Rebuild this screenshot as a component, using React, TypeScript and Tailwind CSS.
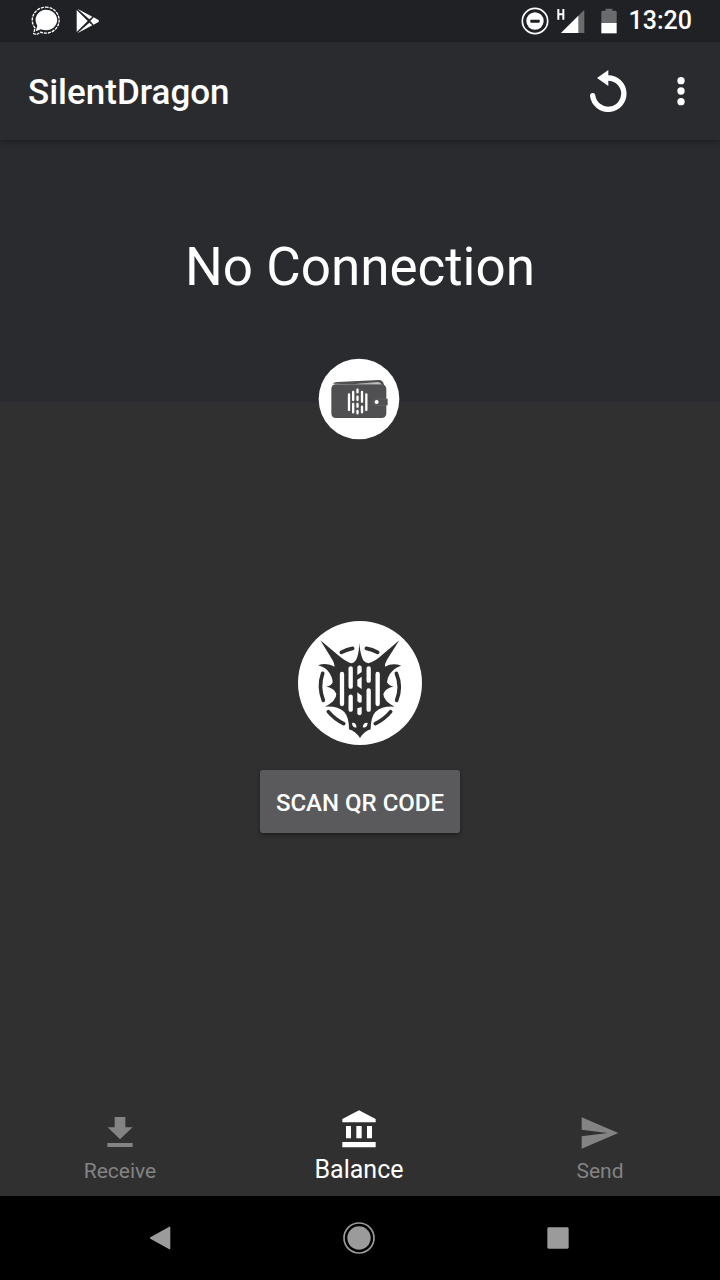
import React from "react";

function ChatIcon() {
  return (
    <svg className="h-[30px] w-[30px]" viewBox="0 0 90 90" fill="none" aria-hidden="true">
      <path
        d="M46 11a34 31 0 1 1-13 59L17 76l5-17A32 31 0 0 1 46 11Z"
        fill="#fff"
      />
      <path
        d="M47 3.500a40 39 0 1 1-15 75L19 86l-8-3 4-17A41 39 0 0 1 47 3.500Z"
        stroke="#fff"
        strokeWidth="4"
        strokeDasharray="9 3"
      />
    </svg>
  );
}

function PlayStoreIcon() {
  return (
    <svg className="h-[26px] w-6" viewBox="0 0 72 78" fill="#fff" aria-hidden="true">
      <path d="M2 6v66l33-33Z" />
      <path d="M4 2l36 32 9-8Z" />
      <path d="M4 76l36-32 9 8Z" />
      <path d="M43 39l10-11 13 7q6 4 0 8l-13 7Z" />
    </svg>
  );
}

function DoNotDisturbIcon() {
  return (
    <svg className="h-[28px] w-[28px]" viewBox="0 0 84 84" fill="none" aria-hidden="true">
      <circle cx="42" cy="42" r="38" stroke="#fff" strokeWidth="5" />
      <circle cx="42" cy="42" r="26" fill="#fff" />
      <rect x="28" y="38" width="28" height="9" rx="2" fill="#202124" />
    </svg>
  );
}

function SignalIcon() {
  return (
    <svg className="h-[28px] w-[28px]" viewBox="0 0 84 84" aria-hidden="true">
      <path d="M82 8v70H12Z" fill="#6a6b6d" />
      <path d="M64 26v52H12Z" fill="#fff" />
      <path d="M4 6v32M19 6v32M4 22h16" stroke="#fff" strokeWidth="6" fill="none" />
    </svg>
  );
}

function BatteryIcon() {
  return (
    <svg className="h-[26px] w-4" viewBox="0 0 48 78" aria-hidden="true">
      <path d="M14 2h20v6h9q4 0 4 4v34H1V12q0-4 4-4h9Z" fill="#6a6b6d" />
      <path d="M1 45h46v31H1Z" fill="#fff" />
    </svg>
  );
}

function ReplayIcon() {
  return (
    <svg className="h-[42px] w-[38px]" viewBox="266 209 114 126" fill="none" aria-hidden="true">
      <path
        d="M277 286A47 47 0 1 0 323 233"
        stroke="#fff"
        strokeWidth="16"
        strokeLinecap="round"
      />
      <path d="M324 209v48l-34-24Z" fill="#fff" />
    </svg>
  );
}

function MoreIcon() {
  return (
    <svg className="h-[30px] w-2" viewBox="0 0 24 90" fill="#fff" aria-hidden="true">
      <circle cx="12" cy="14" r="11" />
      <circle cx="12" cy="45" r="11" />
      <circle cx="12" cy="77" r="11" />
    </svg>
  );
}

function WalletLogo() {
  return (
    <svg className="block h-[82px] w-[82px]" viewBox="23 24 246 246" role="img" aria-label="Wallet">
      <circle cx="146" cy="147" r="121" fill="#fff" />
      <path d="M68 101q2-5 12-5l126-6q12 0 15 15l-4 2q-4-9-13-8l-80 4Z" fill="#505052" />
      <path d="M136 102l66-6q6 0 9 5Z" fill="#b5b5b6" />
      <path
        d="M75 103h138q14 0 15 14v29h4v20h-4v24q0 14-15 14H77q-14 0-14-14v-73q0-12 12-14Z"
        fill="#505052"
      />
      <path d="M228 147h-28q-10 2-10 10t10 9h28" fill="none" stroke="#69696b" strokeWidth="2" />
      <circle cx="199" cy="156" r="6" fill="#fff" />
      <g stroke="#fff" strokeWidth="7" strokeLinecap="round">
        <path d="M116 133v47M128.500 126v24M128.500 162v25M155 126v29M155 170v17M168 133v47" />
        <path d="M141.500 119v8M141.500 140v10M141.500 162v8M141.500 183v7" />
      </g>
    </svg>
  );
}

function DragonLogo() {
  return (
    <svg className="block h-[124px] w-[124px]" viewBox="24 27 372 372" role="img" aria-label="SilentDragon">
      <circle cx="210" cy="213" r="186" fill="#fff" />
      <g fill="none" stroke="#2f2f30" strokeWidth="11" strokeLinecap="round">
        <path d="M154 121q17-9 34-12M229 109q18 3 34 12" />
        <path d="M98 184q-14 40 2 81M319 184q17 40 1 81" />
        <path d="M115 299q18 22 46 36M302 299q-18 22-46 36" />
      </g>
      <path
        d="M91 85L144 129Q166 148 183 154Q198 151 202 134Q207 119 208 92Q210 119 216 136Q220 151 235 154Q256 148 276 129L328 85L291 143Q284 155 285 164Q307 151 334 161Q313 166 299 187Q291 200 291 211Q300 225 313 223Q285 229 280 246Q280 267 314 284Q277 281 256 300Q242 316 242 352Q222 358 210 378Q197 358 177 352Q177 316 163 300Q142 281 105 284Q139 267 139 246Q134 229 106 223Q122 225 128 211Q128 198 118 182Q107 166 84 160Q111 151 134 164Q134 154 127 143Z"
        fill="#2f2f30"
      />
      <g fill="none" stroke="#fff" strokeWidth="13" strokeLinecap="round">
        <path d="M156 186v90M182 169v55M182 254v39M236 169v37M236 235v58M263 186v90" />
      </g>
      <path d="M202 164q6-9 13 0v16l-13 9Z" fill="#fff" />
      <path d="M202 203l13-9v37l-13-9Z" fill="#fff" />
      <path d="M202 241l13 10v19q-7 5-13-3Z" fill="#fff" />
      <path d="M202 289l13-4v20q-6 10-13 0Z" fill="#fff" />
      <path d="M186 333q11-3 14 13q-13 3-14-13ZM233 333q-12-3-15 13q14 3 15-13Z" fill="#fff" />
    </svg>
  );
}

function ReceiveIcon() {
  return (
    <svg className="h-[30px] w-[26px]" viewBox="0 0 78 90" fill="currentColor" aria-hidden="true">
      <path d="M23 0h32v31h22L39 67 2 31h21ZM1 78h76v12H1Z" />
    </svg>
  );
}

function BankIcon() {
  return (
    <svg className="h-[38px] w-[34px]" viewBox="0 0 102 114" fill="currentColor" aria-hidden="true">
      <path d="M51 1l50 26v10H1V27ZM12 48h15v37H12ZM43 48h16v37H43ZM75 48h15v37H75ZM1 96h100v16H1Z" />
    </svg>
  );
}

function SendIcon() {
  return (
    <svg className="h-8 w-[38px]" viewBox="0 0 114 96" fill="currentColor" aria-hidden="true">
      <path d="M2 1l110 47L2 95V58l78-10L2 38Z" />
    </svg>
  );
}

export default function App() {
  return (
    <div className="flex min-h-screen flex-col bg-[#303030] font-['Roboto',sans-serif] text-white">
      <div className="flex h-[42px] items-center justify-between bg-[#202124] pr-7 pl-[30px]">
        <div className="flex items-center gap-4">
          <ChatIcon />
          <PlayStoreIcon />
        </div>
        <div className="flex items-center">
          <DoNotDisturbIcon />
          <span className="ml-2 flex"><SignalIcon /></span>
          <span className="ml-4 flex"><BatteryIcon /></span>
          <span className="ml-3 text-[25px] leading-7 font-medium">13:20</span>
        </div>
      </div>

      <header className="z-10 flex h-[98px] items-center justify-between bg-[#2a2b2f] pt-1 pr-[31px] pl-7 shadow-[0_2px_5px_rgba(0,0,0,0.3)]">
        <h1 className="text-[35px] leading-10 font-medium">SilentDragon</h1>
        <div className="flex items-center gap-[46px]">
          <button type="button" aria-label="Refresh" className="flex h-12 items-center pb-1">
            <ReplayIcon />
          </button>
          <button type="button" aria-label="More options" className="flex h-12 w-4 items-center justify-center pb-1">
            <MoreIcon />
          </button>
        </div>
      </header>

      <section className="relative flex h-[262px] items-center justify-center bg-[#2a2b2f] pb-2">
        <h2 className="text-[53px] leading-[64px]">No Connection</h2>
        <div className="absolute inset-x-0 -bottom-[38px] flex justify-center pr-0.5">
          <WalletLogo />
        </div>
      </section>

      <main className="flex flex-1 flex-col items-center justify-center gap-[25px] pb-8">
        <DragonLogo />
        <button
          type="button"
          className="h-[63px] rounded-[3px] bg-[#5a5a5c] px-4 pt-0.5 text-2xl font-medium shadow-[0_2px_4px_rgba(0,0,0,0.4)]"
        >
          SCAN QR CODE
        </button>
      </main>

      <nav className="grid h-28 grid-cols-3 text-center" aria-label="Main">
        <a href="#receive" className="flex flex-col items-center justify-end gap-3 pb-[13px] text-[21px] leading-6 text-[#838383]">
          <ReceiveIcon />
          Receive
        </a>
        <a href="#balance" aria-current="page" className="flex flex-col items-center justify-end gap-2 pr-0.5 pb-3 text-[25px] leading-7">
          <BankIcon />
          Balance
        </a>
        <a href="#send" className="flex flex-col items-center justify-end gap-2.5 pb-[13px] text-[21px] leading-6 text-[#838383]">
          <SendIcon />
          Send
        </a>
      </nav>

      <div className="flex h-[84px] items-center justify-center gap-[169px] bg-black pr-0.5">
        <button type="button" aria-label="Back" className="flex w-7 justify-center">
          <svg className="h-6 w-[22px]" viewBox="0 0 66 72" fill="#9b9b9b">
            <path d="M61 2q3-1 3 3v62q0 4-3 3L4 38q-3-2 0-4Z" />
          </svg>
        </button>
        <button type="button" aria-label="Home" className="flex">
          <svg className="h-8 w-8" viewBox="0 0 96 96" fill="none">
            <circle cx="48" cy="48" r="45" stroke="#9b9b9b" strokeWidth="5" />
            <circle cx="48" cy="48" r="35" fill="#9b9b9b" />
          </svg>
        </button>
        <button type="button" aria-label="Recent apps" className="flex w-7 justify-center">
          <svg className="h-[22px] w-[22px]" viewBox="0 0 66 66" fill="#9b9b9b">
            <rect x="1" y="1" width="64" height="64" rx="4" />
          </svg>
        </button>
      </div>
    </div>
  );
}
